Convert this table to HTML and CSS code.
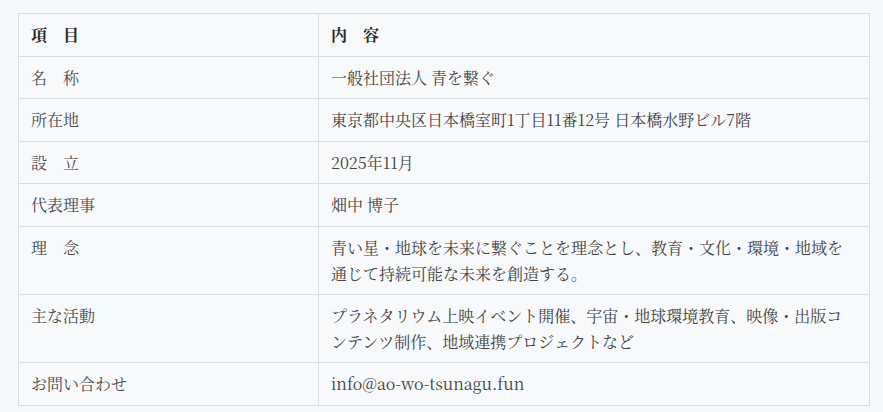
FILE: index.html
```html
<!DOCTYPE html>
<html lang="ja">
<head>
<meta charset="utf-8">
<link rel="stylesheet" href="styles.css">
</head>
<body>
<div class="wrap">
<table class="info">
  <colgroup><col class="c1"><col class="c2"></colgroup>
  <thead>
    <tr><th>項　目</th><th>内　容</th></tr>
  </thead>
  <tbody>
    <tr><td class="lbl">名　称</td><td>一般社団法人 青を繋ぐ</td></tr>
    <tr><td class="lbl">所在地</td><td>東京都中央区日本橋室町1丁目11番12号 日本橋水野ビル7階</td></tr>
    <tr><td class="lbl">設　立</td><td>2025年11月</td></tr>
    <tr><td class="lbl">代表理事</td><td>畑中 博子</td></tr>
    <tr><td class="lbl">理　念</td><td>青い星・地球を未来に繋ぐことを理念とし、教育・文化・環境・地域を通じて持続可能な未来を創造する。</td></tr>
    <tr><td class="lbl">主な活動</td><td>プラネタリウム上映イベント開催、宇宙・地球環境教育、映像・出版コンテンツ制作、地域連携プロジェクトなど</td></tr>
    <tr><td class="lbl">お問い合わせ</td><td>info@ao-wo-tsunagu.fun</td></tr>
  </tbody>
</table>
</div>
</body>
</html>
```
FILE: styles.css
```css
html, body {
  margin: 0;
  padding: 0;
  background: #f7f8fa;
}
body {
  font-family: "Noto Serif CJK JP", "Liberation Serif", "Noto Sans CJK JP", serif;
  color: #444;
}
.wrap {
  padding: 13px 14px 0 18px;
}
.info {
  width: 852px;
  border-collapse: collapse;
  table-layout: fixed;
  font-size: 16px;
  line-height: 1.6;
}
.c1 { width: 300px; }
.info th,
.info td {
  border: 1px solid #dcdde0;
  text-align: left;
  vertical-align: top;
  padding: 8px 12px;
  background: #f8f9fb;
}
.info th {
  font-weight: 700;
  color: #2a2a2a;
}
.info td.lbl {
  color: #4a4a4a;
}
```
